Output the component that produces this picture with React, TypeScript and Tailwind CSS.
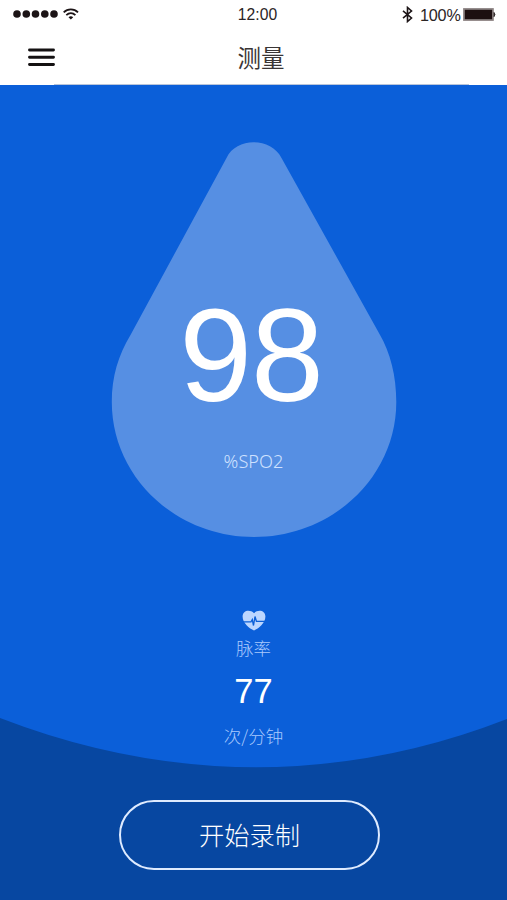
function StatusBar() {
  return (
    <div className="flex h-[30px] items-center text-[#2b2525]">
      <div className="flex w-[200px] items-center pl-[13px]">
        <svg className="relative top-[-1px] h-[8px] w-[46px]" viewBox="0 0 46 8" fill="#1c1416">
          <circle cx="4" cy="4" r="3.8" />
          <circle cx="13.3" cy="4" r="3.8" />
          <circle cx="22.5" cy="4" r="3.8" />
          <circle cx="31.8" cy="4" r="3.8" />
          <circle cx="41" cy="4" r="3.8" />
        </svg>
        <svg className="relative top-[-1px] ml-[4px] h-[12px] w-[16px]" viewBox="0 0 16 12" fill="none" stroke="#1c1416" strokeWidth="1.8">
          <path d="M.7 4.3C4.7.3 11 .3 15 4.3" />
          <path d="M3.3 7.1C6 4.6 9.8 4.6 12.4 7.1" />
          <path d="M5.5 9.2C7 7.9 8.7 7.9 10.2 9.2L7.85 11.5Z" fill="#1c1416" stroke="none" />
        </svg>
      </div>
      <div className="w-[115px] text-center text-[15.7px] leading-[30px]">12:00</div>
      <div className="flex flex-1 items-center pl-[87px]">
        <svg className="relative top-[-1px] h-[17px] w-[11px]" viewBox="0 0 11 17" fill="none" stroke="#1c1416" strokeWidth="1.6">
          <path d="M1 4.8L9.5 12L5.5 15.5V1.5L9.5 5L1 12.2" />
        </svg>
        <span className="ml-[7px] w-[42px] whitespace-nowrap text-[16.2px] leading-[30px] tracking-[-0.2px]">100%</span>
        <svg className="relative top-[-1px] ml-[1px] h-[13px] w-[33px]" viewBox="0 0 33 13">
          <rect x=".7" y=".7" width="29.5" height="11.6" fill="#8f8686" stroke="#8f8686" strokeWidth="1.2" />
          <rect x="1.8" y="1.8" width="27.3" height="9.4" fill="#1c0f10" />
          <path d="M31 4.5Q32.8 6.5 31 8.6Z" fill="#332b2b" stroke="#332b2b" />
        </svg>
      </div>
    </div>
  );
}

function NavBar() {
  return (
    <div className="grid h-[55px] grid-cols-[200px_122px_1fr] text-[#3a3535]">
      <button className="flex items-start pl-[28px] pt-[18px]" aria-label="menu">
        <svg className="h-[19px] w-[27px]" viewBox="0 0 27 19" stroke="#141112" strokeWidth="2.9" strokeLinecap="round">
          <path d="M1.5 2H25.5M1.5 9.3H25.5M1.5 16.5H25.5" />
        </svg>
      </button>
      <h1 className="pt-[12px] text-center text-[23.5px] leading-[35px]">测量</h1>
      <div />
      <div className="col-span-3 ml-[54px] mr-[38px] h-px self-end bg-[#b9c5da]" />
    </div>
  );
}

function Backdrop() {
  return (
    <svg className="absolute inset-0 h-full w-full" viewBox="0 85 507 815">
      <path d="M0 718Q127 767 256 767.3Q384 767 507 719V900H0Z" fill="#0747a1" />
      <path
        d="M226.5 158C236 137 271 137 281.5 158L379.5 334C390.5 353 396.3 376 396.3 402C396.3 476.5 332.6 537 254 537C175.4 537 111.8 476.5 111.8 402C111.8 376 118.5 355 130.500 335Z"
        fill="#568fe3"
      />
    </svg>
  );
}

function HeartIcon() {
  return (
    <svg className="h-[21px] w-[24px]" viewBox="0 0 24 21">
      <path d="M12 20.5C7.5 18.5 .6 13 .6 6.5C.6 .3 8 -1 12 3.2C16 -1 23.4 .3 23.4 6.5C23.4 13 16.5 18.5 12 20.5Z" fill="#bcd6ff" />
      <path d="M.6 11.8H9L10.3 9.5L11.5 15.5L13 6.5L14.4 11.3H23.4" fill="none" stroke="#0b5fd8" strokeWidth="1.3" />
    </svg>
  );
}

export default function App() {
  return (
    <div className="flex h-[900px] w-[507px] flex-col overflow-hidden bg-white font-['Liberation_Sans','Noto_Sans_CJK_SC',sans-serif]">
      <StatusBar />
      <NavBar />
      <main className="relative h-[815px] bg-[#0b5fd9]">
        <Backdrop />
        <div className="relative flex h-full flex-col items-center">
          <div className="mt-[206px] mr-[5px] text-[131px] leading-[130px] tracking-[-1px] text-white">98</div>
          <div className="mt-[27px] h-[26px] font-['Noto_Sans','Open_Sans',sans-serif] text-[18.2px] leading-[26px] font-light text-[#cfe1ff]">%SPO2</div>
          <div className="mt-[136px]">
            <HeartIcon />
          </div>
          <div className="mt-[6px] text-[17.5px] leading-[24px] font-light text-[#a9c9fd]">脉率</div>
          <div className="mt-[10px] text-[34.5px] leading-[40px] text-white">77</div>
          <div className="mt-[13px] font-['Noto_Sans_CJK_SC',sans-serif] text-[17.5px] leading-[24px] font-light text-[#a9c9fd]">次/分钟</div>
          <button className="mt-[52px] mr-[8px] flex h-[70px] w-[261px] items-center justify-center rounded-full border-2 border-[#deebff] pt-[2px] text-[25.3px] leading-[36px] font-light text-white">
            开始录制
          </button>
        </div>
      </main>
    </div>
  );
}
